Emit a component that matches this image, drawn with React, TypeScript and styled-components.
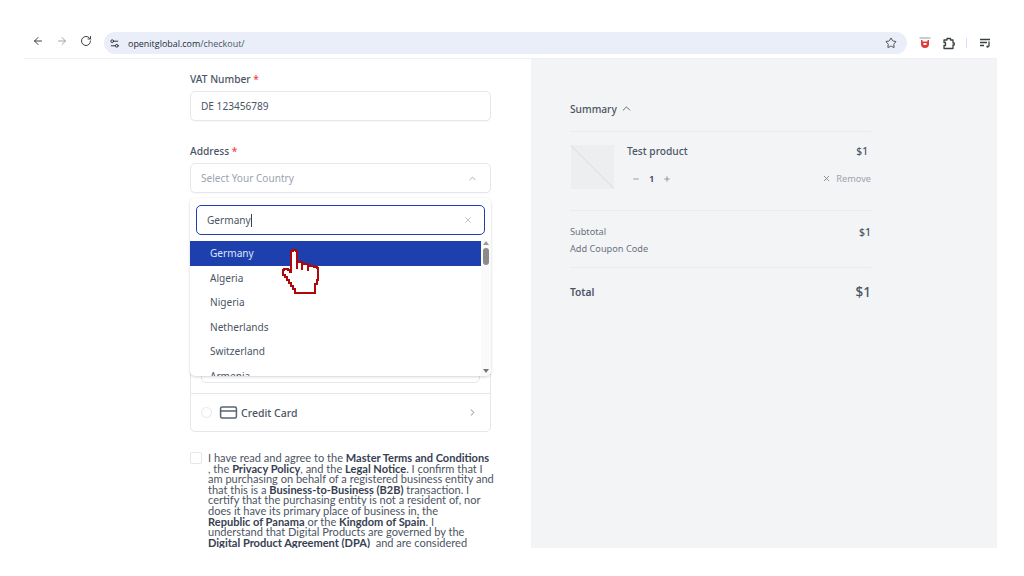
import styled, { createGlobalStyle } from 'styled-components';
import { ArrowLeft, ArrowRight, ChevronRight, ChevronUp, CreditCard, Minus, Plus, RotateCw, Settings2, Star, X } from 'lucide-react';

const GlobalStyle = createGlobalStyle`
  html, body { margin: 0; padding: 0; background: #fff; }
  * { box-sizing: border-box; }
  body { font-family: "Noto Sans", "Open Sans", sans-serif; color: #4b5563; }
`;

const Screen = styled.div`
  width: 1024px;
  height: 576px;
  padding: 28px 27px 28px 24px;
  overflow: hidden;
  position: relative;
`;

const Toolbar = styled.div`
  height: 31px;
  display: flex;
  align-items: flex-start;
  padding-left: 8px;
  border-bottom: 1px solid #eef0f3;
`;

const NavIcons = styled.div`
  display: flex;
  align-items: center;
  gap: 12px;
  height: 26px;
  color: #3c4043;
`;

const Omnibox = styled.div`
  margin-left: 12px;
  width: 803px;
  height: 22px;
  margin-top: 4px;
  border-radius: 11px;
  background: #e9eef8;
  display: flex;
  align-items: center;
  padding: 0 10px 0 5px;
  font-family: "Open Sans", sans-serif;
  font-size: 8.95px;
  color: #1f2937;
`;

const Url = styled.span`
  margin-left: 8px;
  flex: 1;
  span { color: #4b5563; }
`;

const ExtIcons = styled.div`
  display: flex;
  align-items: center;
  height: 26px;
  margin-top: 2px;
  margin-left: 12px;
  color: #3c4043;
`;

const ExtDivider = styled.div`
  width: 1px;
  height: 10px;
  background: #d3e0f5;
  margin: 0 12px 0 11px;
`;

const Columns = styled.div`
  display: grid;
  grid-template-columns: 507px 466px;
  height: 489px;
  overflow: hidden;
`;

const FormColumn = styled.div`
  padding: 12px 16px 0 166px;
  overflow: hidden;
`;

const Label = styled.div`
  font-size: 10.2px;
  font-weight: 500;
  line-height: 17px;
  color: #4b5563;
  margin-bottom: 3px;
  em { color: #ef4444; font-style: normal; }
`;

const Field = styled.div`
  height: 30px;
  width: 301px;
  border: 1px solid #e5e7eb;
  border-radius: 5px;
  background: #fff;
  display: flex;
  align-items: center;
  justify-content: space-between;
  padding: 0 10px;
  font-size: 10.1px;
  color: #4b5563;
  margin-bottom: 22px;
  box-shadow: 0 1px 1px rgba(0, 0, 0, 0.03);
`;

const SelectField = styled(Field)`
  color: #9ca3af;
  margin-bottom: 0;
  svg { color: #9ca3af; margin-right: 2px; }
`;

const SelectWrap = styled.div`
  position: relative;
  width: 301px;
`;

const Dropdown = styled.div`
  position: absolute;
  top: 35px;
  left: 0;
  width: 301px;
  height: 178px;
  background: #fff;
  border-radius: 5px;
  box-shadow: 0 1px 3px rgba(0, 0, 0, 0.18);
  z-index: 3;
  overflow: hidden;
  display: flex;
  flex-direction: column;
`;

const SearchBox = styled.div`
  margin: 7px 6px 6px;
  height: 30px;
  flex: none;
  border: 1px solid #1e40af;
  border-radius: 5px;
  display: flex;
  align-items: center;
  justify-content: space-between;
  padding: 0 11px 0 10px;
  font-size: 10.1px;
  color: #4b5563;
  svg { color: #9ca3af; }
`;

const Caret = styled.span`
  display: inline-block;
  width: 1px;
  height: 13px;
  background: #374151;
  vertical-align: -3px;
`;

const ListRow = styled.div`
  display: flex;
  flex: 1;
  min-height: 0;
`;

const OptionList = styled.div`
  flex: 1;
  overflow: hidden;
`;

const Option = styled.div<{ $active?: boolean }>`
  height: 24.5px;
  line-height: 24.5px;
  padding-left: 20px;
  font-size: 10.1px;
  color: ${p => (p.$active ? '#dbe4f7' : '#4b5563')};
  background: ${p => (p.$active ? '#1e40af' : 'transparent')};
`;

const ScrollRail = styled.div`
  width: 10px;
  background: #fafafa;
  display: flex;
  flex-direction: column;
  align-items: center;
  justify-content: space-between;
  padding-bottom: 3px;
`;

const ScrollThumb = styled.div`
  width: 6px;
  height: 17px;
  border-radius: 3px;
  background: #8b8b8b;
  margin-top: 3px;
  margin-bottom: auto;
`;

const Arrow = styled.div<{ $down?: boolean }>`
  width: 0;
  height: 0;
  border-left: 3.5px solid transparent;
  border-right: 3.5px solid transparent;
  ${p => (p.$down ? 'border-top: 4px solid #777;' : 'border-bottom: 4px solid #999;')}
`;

const PaymentBox = styled.div`
  width: 301px;
  margin-top: 12px;
  border: 1px solid #e5e7eb;
  border-radius: 5px;
  background: #fff;
`;

const PaymentFields = styled.div`
  height: 188px;
  padding: 147px 10px 0;
  border-bottom: 1px solid #e5e7eb;
`;

const InnerField = styled.div`
  height: 30px;
  border: 1px solid #e5e7eb;
  border-radius: 5px;
`;

const PaymentRow = styled.div`
  height: 37px;
  display: flex;
  align-items: center;
  padding: 0 12px 0 10px;
  font-size: 10.5px;
  font-weight: 500;
  color: #4b5563;
`;

const Radio = styled.span`
  width: 11px;
  height: 11px;
  border: 1px solid #e5e7eb;
  border-radius: 50%;
  margin-right: 7px;
`;

const PaymentName = styled.span`
  flex: 1;
  margin-left: 3px;
`;

const Consent = styled.div`
  display: flex;
  width: 301px;
  margin-top: 20px;
`;

const Checkbox = styled.span`
  flex: none;
  width: 12px;
  height: 12px;
  margin: 0 6px 0 0;
  border: 1px solid #e5e7eb;
  border-radius: 2px;
`;

const ConsentText = styled.p`
  margin: 0;
  padding-top: 1px;
  width: 290px;
  white-space: nowrap;
  font-family: "Lato", "Open Sans", sans-serif;
  font-size: 11.05px;
  line-height: 10.6px;
  color: #4b5563;
  b { font-weight: 700; color: #374151; }
`;

const SummaryColumn = styled.div`
  background: #f3f4f6;
  padding: 41px 126px 0 39px;
`;

const SummaryHead = styled.div`
  height: 32px;
  display: flex;
  align-items: flex-start;
  gap: 3px;
  border-bottom: 1px solid #e9ebef;
  font-size: 10.2px;
  font-weight: 500;
  line-height: 18px;
  color: #4b5563;
  svg { margin-top: 2px; }
`;

const Product = styled.div`
  display: flex;
  padding: 13px 0 21px 1px;
  border-bottom: 1px solid #e9ebef;
`;

const Thumb = styled.div`
  width: 43px;
  height: 44px;
  flex: none;
  background: linear-gradient(45deg, #edeef0 49%, #dddee1 49.6%, #dddee1 50.4%, #edeef0 51%);
`;

const ProductInfo = styled.div`
  flex: 1;
  margin-left: 13px;
  display: flex;
  flex-direction: column;
  gap: 14px;
`;

const InfoRow = styled.div`
  display: flex;
  align-items: center;
  justify-content: space-between;
`;

const ProductName = styled.span`
  font-size: 10.2px;
  font-weight: 500;
  line-height: 13px;
  color: #4b5563;
`;

const ProductPrice = styled(ProductName)`
  margin-right: 3px;
`;

const Qty = styled.div`
  display: flex;
  align-items: center;
  gap: 9px;
  padding-left: 5px;
  font-size: 9.5px;
  font-weight: 600;
  color: #374151;
  svg { color: #6b7280; }
`;

const Remove = styled.div`
  display: flex;
  align-items: center;
  gap: 5px;
  font-size: 9.2px;
  color: #9ca3af;
  svg { color: #6b7280; }
`;

const Totals = styled.div`
  padding: 13px 0 10px;
  border-bottom: 1px solid #e9ebef;
  font-size: 9.2px;
  color: #6b7280;
  line-height: 16.5px;
`;

const TotalsPrice = styled.span`
  font-size: 10.5px;
  font-weight: 500;
  color: #4b5563;
`;

const TotalRow = styled(InfoRow)`
  padding-top: 14px;
  font-size: 10.2px;
  font-weight: 600;
  color: #4b5563;
  line-height: 20px;
`;

const TotalPrice = styled.span`
  font-size: 13.5px;
  font-weight: 500;
`;

const Pointer = styled.svg`
  position: absolute;
  left: 282px;
  top: 249px;
  z-index: 5;
  shape-rendering: crispEdges;
`;

function App() {
  return (
    <Screen>
      <GlobalStyle />
      <Toolbar>
        <NavIcons>
          <ArrowLeft size={12} strokeWidth={2} />
          <ArrowRight size={12} strokeWidth={2} color="#a0a4a9" />
          <RotateCw size={12} strokeWidth={2} />
        </NavIcons>
        <Omnibox>
          <Settings2 size={11} strokeWidth={2} />
          <Url>openitglobal.com<span>/checkout/</span></Url>
          <Star size={12} strokeWidth={1.8} color="#3c4043" />
        </Omnibox>
        <ExtIcons>
          <svg width="12" height="12" viewBox="0 0 12 12">
            <rect x="0.5" y="0.5" width="11" height="1" fill="#9a9a9a" />
            <path d="M2 3h1.5v1.5h5V3H10v4a4 4 0 0 1-8 0z" fill="#e23a3a" />
            <rect x="4.5" y="6" width="3" height="2" fill="#fff" />
          </svg>
          <svg width="13" height="13" viewBox="0 0 13 13" style={{ marginLeft: 11 }} fill="none" stroke="#3c4043" strokeWidth="1.3">
            <path d="M2 3h3V1.5h3.5V3H11v3h1.2v2H11v3.5H2V8.5h1.5V5.5H2z" strokeLinejoin="round" />
          </svg>
          <ExtDivider />
          <svg width="13" height="11" viewBox="0 0 13 11" fill="none" stroke="#3c4043" strokeWidth="1.3">
            <path d="M1 1.5h10M1 4.5h7M1 7.5h4" />
            <path d="M10 3.5v5" />
            <circle cx="8.6" cy="8.6" r="1.2" fill="#3c4043" stroke="none" />
          </svg>
        </ExtIcons>
      </Toolbar>
      <Columns>
        <FormColumn>
          <Label>VAT Number <em>*</em></Label>
          <Field>DE 123456789</Field>
          <Label>Address <em>*</em></Label>
          <SelectWrap>
            <SelectField>
              Select Your Country
              <ChevronUp size={11} strokeWidth={1.8} />
            </SelectField>
            <Dropdown>
              <SearchBox>
                <span>Germany<Caret /></span>
                <X size={10} strokeWidth={1.6} />
              </SearchBox>
              <ListRow>
                <OptionList>
                  <Option $active>Germany</Option>
                  <Option>Algeria</Option>
                  <Option>Nigeria</Option>
                  <Option>Netherlands</Option>
                  <Option>Switzerland</Option>
                  <Option>Armenia</Option>
                </OptionList>
                <ScrollRail>
                  <Arrow />
                  <ScrollThumb />
                  <Arrow $down />
                </ScrollRail>
              </ListRow>
            </Dropdown>
          </SelectWrap>
          <PaymentBox>
            <PaymentFields>
              <InnerField />
            </PaymentFields>
            <PaymentRow>
              <Radio />
              <CreditCard size={19} strokeWidth={1.9} color="#5b6473" />
              <PaymentName>Credit Card</PaymentName>
              <ChevronRight size={11} strokeWidth={1.8} color="#6b7280" />
            </PaymentRow>
          </PaymentBox>
          <Consent>
            <Checkbox />
            <ConsentText>
              I have read and agree to the <b>Master Terms and Conditions</b><br />
              , the <b>Privacy Policy</b>, and the <b>Legal Notice</b>. I confirm that I<br />
              am purchasing on behalf of a registered business entity and<br />
              that this is a <b>Business-to-Business (B2B)</b> transaction. I<br />
              certify that the purchasing entity is not a resident of, nor<br />
              does it have its primary place of business in, the<br />
              <b>Republic of Panama</b> or the <b>Kingdom of Spain</b>. I<br />
              understand that Digital Products are governed by the<br />
              <b>Digital Product Agreement (DPA)</b>&nbsp; and are considered
            </ConsentText>
          </Consent>
        </FormColumn>
        <SummaryColumn>
          <SummaryHead>
            Summary
            <ChevronUp size={13} strokeWidth={1.6} />
          </SummaryHead>
          <Product>
            <Thumb />
            <ProductInfo>
              <InfoRow>
                <ProductName>Test product</ProductName>
                <ProductPrice>$1</ProductPrice>
              </InfoRow>
              <InfoRow>
                <Qty>
                  <Minus size={8} />
                  <span>1</span>
                  <Plus size={8} />
                </Qty>
                <Remove>
                  <X size={9} />
                  Remove
                </Remove>
              </InfoRow>
            </ProductInfo>
          </Product>
          <Totals>
            <InfoRow>
              <span>Subtotal</span>
              <TotalsPrice>$1</TotalsPrice>
            </InfoRow>
            <div>Add Coupon Code</div>
          </Totals>
          <TotalRow>
            <span>Total</span>
            <TotalPrice>$1</TotalPrice>
          </TotalRow>
        </SummaryColumn>
      </Columns>
      {/* pixel hand cursor over the dropdown */}
      <Pointer width="38" height="47" viewBox="0 0 38 47">
        <path
          d="M11 1h3v1h1v11h5v2h6v2h6v1h3v1h1v12h-1v4h-2v9H13v-4h-2v-3H9v-3H7v-3H5v-3H3v-2H1v-5h1v-1h4v1h2v2h1V2h2z"
          fill="#fff"
          stroke="#b00808"
          strokeWidth="2.6"
        />
        <path d="M15 13v7M20 15v6M26 17v5" stroke="#b00808" strokeWidth="1.6" fill="none" />
      </Pointer>
    </Screen>
  );
}

export default App;
